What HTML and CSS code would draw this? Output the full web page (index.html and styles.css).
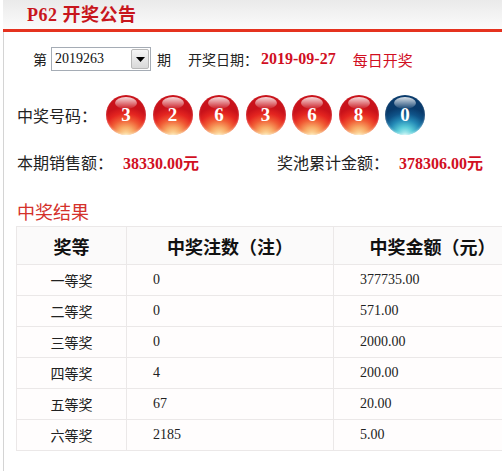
FILE: index.html
```html
<!DOCTYPE html>
<html lang="zh">
<head>
<meta charset="utf-8">
<title>P62 开奖公告</title>
<link rel="stylesheet" href="styles.css">
</head>
<body>
<div class="page">
  <div class="header"><span class="title"><span class="title-num">P62</span> 开奖公告</span></div>
  <div class="content">
    <div class="row-issue">
      <span class="label">第</span>
      <div class="select">
        <span class="select-value">2019263</span>
        <span class="select-btn"><svg width="9" height="5" viewBox="0 0 9 5"><path d="M0 0 H9 L4.5 5 Z" fill="#000"/></svg></span>
      </div>
      <span class="label">期</span>
      <span class="label date-label">开奖日期：</span>
      <span class="date">2019-09-27</span>
      <span class="daily">每日开奖</span>
    </div>
    <div class="row-balls">
      <span class="big-label">中奖号码：</span>
      <div class="balls">
        <span class="ball red">3</span>
        <span class="ball red">2</span>
        <span class="ball red">6</span>
        <span class="ball red">3</span>
        <span class="ball red">6</span>
        <span class="ball red">8</span>
        <span class="ball blue">0</span>
      </div>
    </div>
    <div class="row-sales">
      <div class="stat"><span class="big-label">本期销售额：</span><span class="amount">38330.00<span class="yuan">元</span></span></div>
      <div class="stat pool"><span class="big-label">奖池累计金额：</span><span class="amount">378306.00<span class="yuan">元</span></span></div>
    </div>
    <div class="section-title">中奖结果</div>
    <table class="results">
      <thead>
        <tr><th class="c1">奖等</th><th class="c2">中奖注数（注）</th><th class="c3">中奖金额（元）</th></tr>
      </thead>
      <tbody>
        <tr><td class="c1">一等奖</td><td class="num">0</td><td class="num">377735.00</td></tr>
        <tr><td class="c1">二等奖</td><td class="num">0</td><td class="num">571.00</td></tr>
        <tr><td class="c1">三等奖</td><td class="num">0</td><td class="num">2000.00</td></tr>
        <tr><td class="c1">四等奖</td><td class="num">4</td><td class="num">200.00</td></tr>
        <tr><td class="c1">五等奖</td><td class="num">67</td><td class="num">20.00</td></tr>
        <tr><td class="c1">六等奖</td><td class="num">2185</td><td class="num">5.00</td></tr>
      </tbody>
    </table>
  </div>
</div>
</body>
</html>
```

FILE: styles.css
```css
html, body {
  margin: 0;
  padding: 0;
  background: #fff;
  overflow: hidden;
}
body {
  font-family: "Noto Sans CJK SC", "Noto Sans", sans-serif;
  font-size: 14px;
  color: #222;
}
.page {
  width: 502px;
  height: 471px;
  overflow: hidden;
}
.header {
  height: 29px;
  background: linear-gradient(#eaeaea, #fbfbfb);
  border-bottom: 3px solid #e5321f;
  margin-left: 3px;
  display: flex;
  align-items: center;
  padding-left: 24px;
}
.title {
  font-size: 18px;
  font-weight: bold;
  color: #c8161d;
  font-family: "Liberation Serif", "Noto Sans CJK SC", serif;
  line-height: 1;
  margin-top: 1px;
  letter-spacing: 0.5px;
}
.title-num {
  font-family: "Liberation Serif", serif;
}
.content {
  margin-left: 3px;
  border-left: 1px solid #d4d4d4;
  height: 439px;
  overflow: hidden;
}
.row-issue {
  display: flex;
  align-items: center;
  height: 24px;
  margin-top: 15px;
  padding-left: 29px;
}
.label {
  font-size: 14px;
  color: #222;
}
.select {
  width: 98px;
  height: 22px;
  border: 1px solid #a5acb5;
  margin: 0 6px 0 4px;
  display: flex;
  align-items: center;
  justify-content: space-between;
  background: #fff;
}
.select-value {
  font-family: "Liberation Serif", serif;
  font-size: 14px;
  color: #111;
  padding-left: 3px;
}
.select-btn {
  width: 16px;
  height: 18px;
  margin-right: 1px;
  border: 1px solid #b8b8b8;
  border-radius: 2px;
  background: linear-gradient(#f6f6f6, #d9d9d9);
  display: flex;
  align-items: center;
  justify-content: center;
}
.date-label {
  margin-left: 17px;
}
.date {
  font-family: "Liberation Serif", serif;
  font-weight: bold;
  font-size: 16px;
  color: #d10f1f;
  margin-left: 3px;
}
.daily {
  color: #d10f1f;
  font-size: 15px;
  margin-left: 17px;
}
.row-balls {
  display: flex;
  align-items: center;
  margin-top: 24px;
  padding-left: 13px;
}
.big-label {
  font-size: 16px;
  color: #222;
}
.balls {
  display: flex;
  gap: 6.5px;
  margin-left: 9px;
}
.ball {
  position: relative;
  width: 40px;
  height: 40px;
  border-radius: 50%;
  display: flex;
  align-items: center;
  justify-content: center;
  color: #fff;
  font-family: "Liberation Serif", serif;
  font-weight: bold;
  font-size: 19px;
  overflow: hidden;
}
.ball.red {
  background: radial-gradient(ellipse 75% 70% at 50% 100%, #fde3a8 0%, #f8aa66 28%, #f05a34 55%, #e42520 78%, #c9121a 100%);
}
.ball.blue {
  background: radial-gradient(ellipse 75% 70% at 50% 100%, #c2f4f4 0%, #5accd9 28%, #2388b5 55%, #0f5388 78%, #093a6b 100%);
}
.ball::before {
  content: "";
  position: absolute;
  left: 9px;
  top: 2px;
  width: 22px;
  height: 12px;
  border-radius: 50%;
  background: linear-gradient(rgba(255,255,255,0.85), rgba(255,255,255,0.05));
}
.ball::after {
  content: "";
  position: absolute;
  inset: 0;
  border-radius: 50%;
  box-shadow: inset 0 -1px 2px rgba(255,255,255,0.4);
}
.row-sales {
  display: flex;
  align-items: center;
  margin-top: 15px;
  padding-left: 13px;
  height: 24px;
}
.stat {
  display: flex;
  align-items: center;
}
.pool {
  margin-left: 78px;
}
.amount {
  font-family: "Liberation Serif", serif;
  font-weight: bold;
  font-size: 16px;
  color: #d10f1f;
  margin-left: 10px;
}
.yuan {
  font-family: "Noto Sans CJK SC", sans-serif;
  font-weight: bold;
}
.section-title {
  font-size: 18px;
  color: #d4312b;
  padding-left: 13px;
  margin-top: 24px;
  line-height: 26px;
}
.results {
  margin-left: 12px;
  margin-top: 2px;
  border-collapse: collapse;
  table-layout: fixed;
  width: 516px;
  background: #fffdfd;
}
.results th, .results td {
  border: 1px solid #ebe8e8;
  padding: 0;
}
.results th {
  height: 37px;
  font-size: 18px;
  font-weight: bold;
  color: #111;
  background: #fbfafa;
  text-align: center;
}
.results td {
  height: 30px;
  font-size: 14px;
  color: #222;
}
.results .c1 {
  width: 109px;
  text-align: center;
}
.results .c2 {
  width: 206px;
}
.results td.num {
  font-family: "Liberation Serif", serif;
  padding-left: 26px;
}
```
